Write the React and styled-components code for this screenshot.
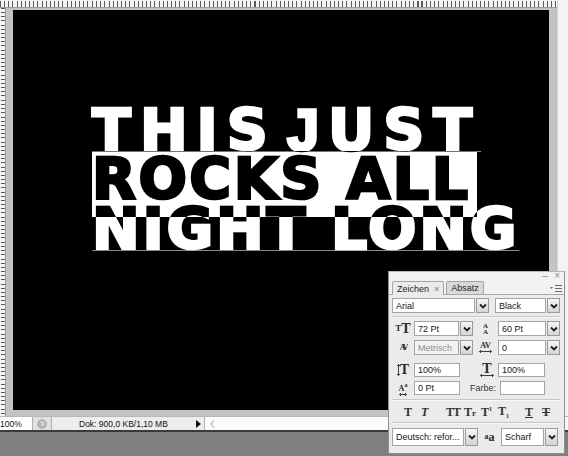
import React from "react";
import styled, { createGlobalStyle } from "styled-components";

const GlobalStyle = createGlobalStyle`
  html, body { margin: 0; padding: 0; background: #7f7f7f; }
  body { font-family: "Liberation Sans", Arial, sans-serif; }
`;

const Screen = styled.div`
  position: relative;
  width: 568px;
  height: 456px;
  overflow: hidden;
  background: #7f7f7f;
  display: flex;
  flex-direction: column;
`;

// document window: rulers, pasteboard, scrollbar
const DocWindow = styled.div`
  display: grid;
  grid-template-columns: 6px 551px 11px;
  grid-template-rows: 8px 408px;
`;

const TopRuler = styled.div`
  grid-column: 1 / 3;
  background-color: #f4f4f4;
  background-image: repeating-linear-gradient(
    90deg,
    #5a5a5a 0 1px,
    transparent 1px 4px,
    #5a5a5a 4px 5px,
    transparent 5px 8.35px
  );
  background-size: 100% 6px;
  background-position: 0 1px;
  background-repeat: no-repeat;
  box-shadow: inset 0 -1px 0 #9a9a9a, inset 0 1px 0 #f4f4f4;
`;

const LeftRuler = styled.div`
  background-color: #f4f4f4;
  background-image: repeating-linear-gradient(
    180deg,
    #5a5a5a 0 1px,
    transparent 1px 4px,
    #5a5a5a 4px 5px,
    transparent 5px 8.35px
  );
  background-size: 5px 100%;
  background-position: 1px 0;
  background-repeat: no-repeat;
  box-shadow: inset -1px 0 0 #9a9a9a;
`;

const ScrollColumn = styled.div`
  grid-column: 3;
  grid-row: 1 / 3;
  background: #f3f3f3;
  border-left: 1px solid #d6d6d6;
`;

const Pasteboard = styled.div`
  background: #c3c3c3;
  padding: 2px 8px 6px 7px;
`;

const Canvas = styled.div`
  height: 400px;
  background: #000;
  isolation: isolate;
  padding: 95.5px 0 0 79px;
  box-sizing: border-box;
`;

const TextBlock = styled.div`
  position: relative;
  display: inline-block;
`;

const Line = styled.div`
  font-family: "DejaVu Sans", "Liberation Sans", sans-serif;
  font-weight: bold;
  font-size: 57px;
  line-height: 49.5px;
  color: #fff;
  white-space: nowrap;
  -webkit-text-stroke: 2.6px #fff;
  letter-spacing: ${(p) => p.$ls || 0}px;
  word-spacing: ${(p) => p.$ws || 0}px;
  text-decoration: ${(p) => (p.$baseline ? "underline" : "none")};
  text-decoration-color: #8a8a8a;
  text-decoration-thickness: 1px;
  text-underline-offset: 1px;
  text-decoration-skip-ink: none;
`;

// DejaVu's J drops below the baseline, Arial Black's does not
const FlatJ = styled.span`
  font-family: "Liberation Sans", Arial, sans-serif;
  -webkit-text-stroke: 3.4px #fff;
`;

// inverted selection over the second line
const Selection = styled.div`
  position: absolute;
  left: 0;
  top: 45.5px;
  width: 385px;
  height: 66px;
  background: #fff;
  mix-blend-mode: difference;
  pointer-events: none;
`;

// status bar
const StatusBar = styled.div`
  display: flex;
  height: 13px;
  background: #ededed;
  border-top: 1px solid #b8b8b8;
  border-bottom: 2px solid #3a3a3a;
  font-size: 8.5px;
  color: #111;
`;

const StatusCell = styled.div`
  width: ${(p) => p.$w}px;
  flex: ${(p) => (p.$grow ? 1 : "none")};
  background: ${(p) => p.$bg || "#ededed"};
  border-right: ${(p) => (p.$edge ? "1px solid #b0b0b0" : "none")};
  display: flex;
  align-items: center;
  justify-content: ${(p) => p.$align || "flex-start"};
  padding-left: ${(p) => p.$pad || 0}px;
  box-sizing: border-box;
  white-space: nowrap;
`;

const Desk = styled.div`
  flex: 1;
  background: #7f7f7f;
`;

// character panel
const Panel = styled.div`
  position: absolute;
  left: 388px;
  top: 271px;
  width: 177px;
  height: 183px;
  box-sizing: border-box;
  background: #ebebeb;
  border: 1px solid #8e8e8e;
  border-top-color: #b5b5b5;
  display: flex;
  flex-direction: column;
  font-size: 9px;
  color: #1a1a1a;
`;

const PanelHead = styled.div`
  height: 8px;
  display: flex;
  justify-content: flex-end;
  align-items: center;
  gap: 6px;
  padding-right: 4px;
  background: #f2f2f2;
  color: #8c8c8c;
  font-size: 10px;
  line-height: 8px;
`;

const TabRow = styled.div`
  height: 14px;
  display: flex;
  align-items: flex-end;
  gap: 2px;
  padding-left: 3px;
  padding-right: 2px;
  background: #f2f2f2;
  border-bottom: 1px solid #a8a8a8;
`;

const Tab = styled.div`
  padding: 0 4px;
  display: flex;
  align-items: center;
  gap: 5px;
  border: 1px solid #a3a3a3;
  border-bottom: none;
  border-radius: 2px 2px 0 0;
  background: ${(p) => (p.$active ? "#ebebeb" : "#d9d9d9")};
  margin-bottom: ${(p) => (p.$active ? "-1px" : "0")};
  height: ${(p) => (p.$active ? "14px" : "13px")};
  box-sizing: border-box;
  color: #222;
  font-size: 9px;
`;

const TabClose = styled.span`
  color: #777;
  font-size: 9px;
`;

const MenuButton = styled.div`
  margin-left: auto;
  margin-bottom: 2px;
  display: flex;
`;

const Body = styled.div`
  display: flex;
  flex-direction: column;
  padding: 3px 4px 0 3px;
`;

const Row = styled.div`
  display: grid;
  grid-template-columns: ${(p) => p.$cols};
  align-items: center;
  height: ${(p) => p.$h || 15}px;
  margin-top: ${(p) => p.$mt || 0}px;
`;

const Separator = styled.div`
  height: 1px;
  background: #c6c6c6;
  border-bottom: 1px solid #f8f8f8;
  margin: ${(p) => p.$m || "3px 0 3px"};
`;

const Field = styled.div`
  display: flex;
  gap: 1px;
  height: ${(p) => p.$h || 15}px;
  width: ${(p) => (p.$w ? `${p.$w}px` : "auto")};
`;

const FieldBox = styled.div`
  flex: 1;
  min-width: 0;
  background: ${(p) => (p.$disabled ? "#f3f3f3" : "#fff")};
  border: 1px solid #a4a4a4;
  color: ${(p) => (p.$disabled ? "#8d8d8d" : "#161616")};
  padding-left: 3px;
  display: flex;
  align-items: center;
  white-space: nowrap;
  overflow: hidden;
`;

const DropButton = styled.div`
  width: 11px;
  border: 1px solid #9a9a9a;
  background: linear-gradient(#f6f6f6, #d4d4d4);
  display: flex;
  align-items: center;
  justify-content: center;
`;

const IconCell = styled.div`
  display: flex;
  align-items: center;
  justify-content: ${(p) => p.$justify || "center"};
  padding-right: ${(p) => p.$pr || 0}px;
  font-family: "Liberation Serif", "DejaVu Serif", serif;
  font-weight: bold;
  color: #2a2a2a;
  line-height: 1;
`;

const Label = styled.div`
  text-align: right;
  padding-right: 2px;
  color: #333;
`;

const Swatch = styled.div`
  height: 12px;
  background: #fff;
  border: 1px solid #a4a4a4;
  margin-left: 2px;
`;

const StyleRow = styled.div`
  display: flex;
  align-items: center;
  height: 16px;
  padding-left: 12px;
  font-family: "Liberation Serif", "DejaVu Serif", serif;
  font-weight: bold;
  font-size: 12px;
  color: #333;
`;

const StyleGlyph = styled.span`
  width: ${(p) => p.$w}px;
  font-style: ${(p) => (p.$italic ? "italic" : "normal")};
  text-decoration: ${(p) => p.$deco || "none"};
  letter-spacing: ${(p) => p.$ls || 0}px;
`;

const Tiny = styled.span`
  font-size: ${(p) => p.$size}px;
  vertical-align: ${(p) => p.$va || "baseline"};
`;

const Stack = styled.span`
  display: flex;
  flex-direction: column;
  align-items: center;
  font-size: ${(p) => p.$size || 7}px;
  line-height: ${(p) => p.$lh || 7}px;
`;

const Chevron = () => (
  <svg width="8" height="6" viewBox="0 0 8 6">
    <polyline points="1,1.5 4,4.5 7,1.5" fill="none" stroke="#1e1e1e" strokeWidth="1.8" />
  </svg>
);

const Select = ({ w, h, value, disabled }) => (
  <Field $w={w} $h={h}>
    <FieldBox $disabled={disabled}>{value}</FieldBox>
    <DropButton>
      <Chevron />
    </DropButton>
  </Field>
);

const Input = ({ w, value }) => (
  <Field $w={w} $h={14}>
    <FieldBox>{value}</FieldBox>
  </Field>
);

const ArrowV = () => (
  <svg width="3" height="12" viewBox="0 0 3 12">
    <path d="M1.5 0.5 V11.5 M0 2 L1.5 0.5 L3 2 M0 10 L1.5 11.5 L3 10" stroke="#2a2a2a" strokeWidth="0.9" fill="none" />
  </svg>
);

const ArrowH = ({ w = 16 }) => (
  <svg width={w} height="3" viewBox={`0 0 ${w} 3`}>
    <path d={`M0.5 1.5 H${w - 0.5} M2 0 L0.5 1.5 L2 3 M${w - 2} 0 L${w - 0.5} 1.5 L${w - 2} 3`} stroke="#2a2a2a" strokeWidth="0.9" fill="none" />
  </svg>
);

const PanelMenuIcon = () => (
  <svg width="12" height="7" viewBox="0 0 12 7">
    <path d="M0 2 L3 2 L1.5 4 Z" fill="#666" />
    <path d="M5 0.5 H12 M5 3.5 H12 M5 6.5 H12" stroke="#666" strokeWidth="1" />
  </svg>
);

const StatusIcon = () => (
  <svg width="10" height="10" viewBox="0 0 10 10">
    <circle cx="5" cy="5" r="4.3" fill="#b4b4b4" stroke="#9a9a9a" strokeWidth="0.6" />
    <path d="M3.2 3.2 H6.2 V6.6 M6.2 6.6 L4.8 5.2" stroke="#eee" strokeWidth="1" fill="none" />
  </svg>
);

const PlayArrow = () => (
  <svg width="5" height="8" viewBox="0 0 5 8">
    <path d="M0 0 L5 4 L0 8 Z" fill="#111" />
  </svg>
);

const ScrollLeft = () => (
  <svg width="5" height="8" viewBox="0 0 5 8">
    <polyline points="4,0.5 1,4 4,7.5" fill="none" stroke="#b9c3d0" strokeWidth="1.2" />
  </svg>
);

export default function App() {
  return (
    <Screen>
      <GlobalStyle />
      <DocWindow>
        <TopRuler />
        <ScrollColumn />
        <LeftRuler />
        <Pasteboard>
          <Canvas>
            <TextBlock>
              <Line $ls={9} $ws={-18.5} $baseline>
                THIS <FlatJ>J</FlatJ>UST
              </Line>
              <Line $ls={2.5}>ROCKS ALL</Line>
              <Line $ls={2.8} $baseline>NIGHT LONG</Line>
              <Selection />
            </TextBlock>
          </Canvas>
        </Pasteboard>
      </DocWindow>

      <StatusBar>
        <StatusCell $w={33} $bg="#fff" $edge>100%</StatusCell>
        <StatusCell $w={19} $bg="#e0e0e0" $edge $align="center">
          <StatusIcon />
        </StatusCell>
        <StatusCell $w={141} $pad={27}>Dok: 900,0 KB/1,10 MB</StatusCell>
        <StatusCell $w={12} $align="center" $edge>
          <PlayArrow />
        </StatusCell>
        <StatusCell $grow $bg="#fbfbfb" $pad={5}>
          <ScrollLeft />
        </StatusCell>
      </StatusBar>
      <Desk />

      <Panel>
        <PanelHead>
          <span>–</span>
          <span>×</span>
        </PanelHead>
        <TabRow>
          <Tab $active>
            Zeichen <TabClose>×</TabClose>
          </Tab>
          <Tab>Absatz</Tab>
          <MenuButton>
            <PanelMenuIcon />
          </MenuButton>
        </TabRow>
        <Body>
          <Row $cols="97px 6px 65px">
            <Select w={97} value="Arial" />
            <span />
            <Select w={65} value="Black" />
          </Row>
          <Separator />
          <Row $cols="22px 59px 25px 62px">
            <IconCell>
              <Tiny $size={9}>T</Tiny>
              <Tiny $size={14}>T</Tiny>
            </IconCell>
            <Select w={59} value="72 Pt" />
            <IconCell>
              <Stack $size={7} $lh={6}>
                <span>A</span>
                <span>A</span>
              </Stack>
            </IconCell>
            <Select w={62} value="60 Pt" />
          </Row>
          <Row $cols="22px 59px 25px 62px" $mt={4}>
            <IconCell>
              <Stack $size={8} $lh={8}>
                <span style={{ letterSpacing: "-2px" }}>AV</span>
              </Stack>
            </IconCell>
            <Select w={59} value="Metrisch" disabled />
            <IconCell>
              <Stack $size={8} $lh={8}>
                <span>AV</span>
                <ArrowH w={13} />
              </Stack>
            </IconCell>
            <Select w={62} value="0" />
          </Row>
          <Row $cols="22px 46px 38px 47px" $h={14} $mt={8}>
            <IconCell>
              <ArrowV />
              <Tiny $size={14}>T</Tiny>
            </IconCell>
            <Input w={46} value="100%" />
            <IconCell $justify="flex-end" $pr={4}>
              <Stack $size={14} $lh={11}>
                <span>T</span>
                <ArrowH w={14} />
              </Stack>
            </IconCell>
            <Input w={47} value="100%" />
          </Row>
          <Row $cols="22px 46px 38px 47px" $h={14} $mt={4}>
            <IconCell>
              <Stack $size={8} $lh={8}>
                <span>
                  A<Tiny $size={6} $va="super">a</Tiny>
                </span>
                <ArrowH w={8} />
              </Stack>
            </IconCell>
            <Input w={46} value="0 Pt" />
            <Label>Farbe:</Label>
            <Swatch />
          </Row>
          <Separator $m="4px 0 3px" />
          <StyleRow>
            <StyleGlyph $w={17}>T</StyleGlyph>
            <StyleGlyph $w={25} $italic>T</StyleGlyph>
            <StyleGlyph $w={18} $ls={-1}>TT</StyleGlyph>
            <StyleGlyph $w={17}>
              T<Tiny $size={9}>r</Tiny>
            </StyleGlyph>
            <StyleGlyph $w={17}>
              T<Tiny $size={6} $va="super">1</Tiny>
            </StyleGlyph>
            <StyleGlyph $w={27}>
              T<Tiny $size={6} $va="sub">1</Tiny>
            </StyleGlyph>
            <StyleGlyph $w={17} $deco="underline">T</StyleGlyph>
            <StyleGlyph $w={12} $deco="line-through">T</StyleGlyph>
          </StyleRow>
          <Separator $m="2px 0 4px" />
          <Row $cols="86px 23px 57px" $h={18}>
            <Select w={86} h={18} value="Deutsch: refor..." />
            <IconCell>
              <Tiny $size={8} $va="super">a</Tiny>
              <Tiny $size={12}>a</Tiny>
            </IconCell>
            <Select w={57} h={18} value="Scharf" />
          </Row>
        </Body>
      </Panel>
    </Screen>
  );
}
